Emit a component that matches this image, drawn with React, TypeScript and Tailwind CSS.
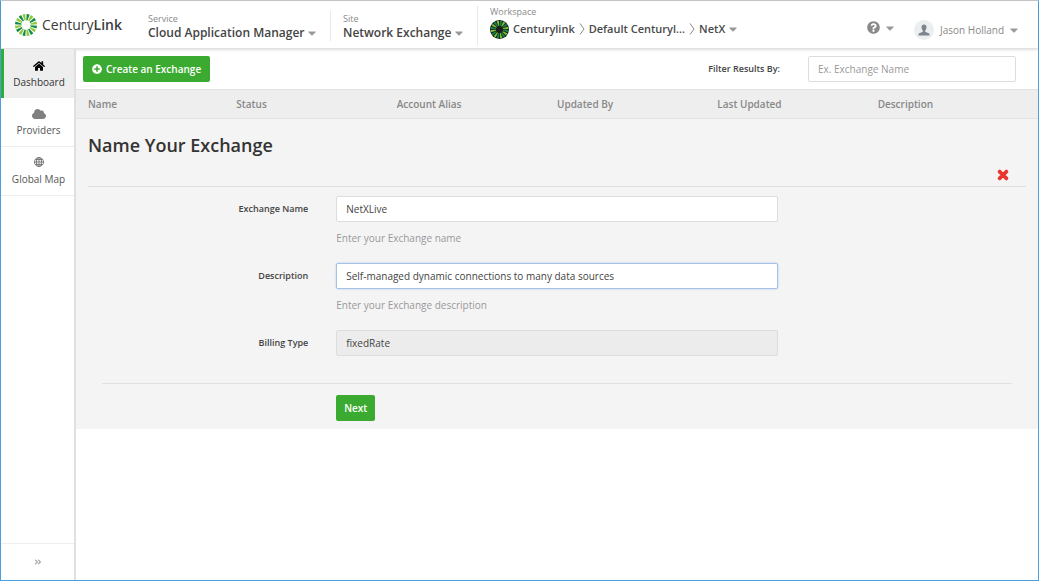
import React from 'react'
import { FaAngleDoubleRight, FaCaretDown, FaCloud, FaHome, FaPlusCircle, FaQuestionCircle, FaTimes } from 'react-icons/fa'

const columns = ['Name', 'Status', 'Account Alias', 'Updated By', 'Last Updated', 'Description']

const rays = Array.from({ length: 16 }, (_, i) => i)

const Burst = ({ dark, light }: { dark: string, light: string }) => (
	<g>
		{rays.map((i) => (
			<polygon
				key={i}
				points="-1.5,-11 1.5,-11 0.6,-4.6 -0.6,-4.6"
				fill={i % 2 ? light : dark}
				transform={`rotate(${i * 22.5 + 11.25})`}
			/>
		))}
	</g>
)

const Logo = () => (
	<a href="#" className="flex w-[132px] shrink-0 items-center gap-1 pl-[13px] text-sm leading-5 text-[#3c3c3c]">
		<svg className="h-6 w-6 shrink-0" viewBox="-12 -12 24 24" aria-hidden="true">
			<Burst dark="#118a43" light="#8cc83c" />
		</svg>
		<span>Century<b className="font-semibold">Link</b></span>
	</a>
)

const WorkspaceBadge = () => (
	<svg className="h-[19px] w-[19px] shrink-0" viewBox="-12 -12 24 24" aria-hidden="true">
		<circle r="12" fill="#1c1f1c" />
		<Burst dark="#0c8a45" light="#86bd35" />
	</svg>
)

const Globe = () => (
	<svg className="h-2.5 w-2.5" viewBox="0 0 20 20" fill="none" stroke="#7a7a7a" strokeWidth="2" aria-hidden="true">
		<circle cx="10" cy="10" r="9" />
		<ellipse cx="10" cy="10" rx="5" ry="9" />
		<path d="M10 1v18M1 10h18M3 5h14M3 15h14" />
	</svg>
)

const Person = () => (
	<svg className="h-3 w-3" viewBox="0 0 24 24" fill="#7d868d" aria-hidden="true">
		<path d="M12 1c3 0 5 2.200 5 5.500 0 3-1.300 5.500-2.600 6.700v2.300c1.800 1.200 7.600 2.200 8.600 4.500V23H1v-3c1-2.300 6.800-3.300 8.600-4.500v-2.300C8.300 12 7 9.500 7 6.500 7 3.200 9 1 12 1z" />
	</svg>
)

const Caret = () => <FaCaretDown className="h-3 w-2 shrink-0 text-[#999]" preserveAspectRatio="xMidYMid slice" aria-hidden="true" />

const Chevron = () => (
	<svg className="h-3 w-1.5 shrink-0" viewBox="0 0 6 12" fill="none" stroke="#8a8a8a" aria-hidden="true">
		<path d="M1 0.500L5 6L1 11.500" />
	</svg>
)

const Picker = ({ label, value }: { label: string, value: string }) => (
	<div className="flex flex-col pt-0.5">
		<span className="text-[9px] leading-3 text-[#8a8a8a]">{label}</span>
		<button className="flex items-center gap-1 text-xs leading-4 font-semibold text-[#444]">
			{value}
			<Caret />
		</button>
	</div>
)

const Header = () => (
	<header className="flex h-12 items-center border-b border-[#e2e2e2] whitespace-nowrap shadow-sm">
		<Logo />
		<div className="flex flex-1 items-center pt-0.5">
			<div className="w-[197px] pl-[15px]">
				<Picker label="Service" value="Cloud Application Manager" />
			</div>
			<div className="flex w-[147px] border-l border-[#e8e8e8] pl-3">
				<Picker label="Site" value="Network Exchange" />
			</div>
			<div className="border-l border-[#e8e8e8] pb-1.5 pl-3">
				<p className="text-[9px] leading-3 text-[#8a8a8a]">Workspace</p>
				<nav className="flex items-center pt-px text-[11px] leading-5 font-semibold text-[#4a4a4a]">
					<WorkspaceBadge />
					<a href="#" className="mx-1">Centurylink</a>
					<Chevron />
					<a href="#" className="mx-1">Default Centuryl...</a>
					<Chevron />
					<button className="ml-1 flex items-center gap-1">NetX <Caret /></button>
				</nav>
			</div>
		</div>
		<div className="flex items-center gap-5 pt-2.5 pr-5">
			<button className="flex items-center gap-1.5 pb-1" aria-label="Help">
				<FaQuestionCircle className="h-[13px] w-[13px] text-[#8a8a8a]" />
				<Caret />
			</button>
			<button className="flex items-center gap-1.5 text-[10px] leading-5 text-[#888]">
				<span className="flex h-5 w-5 items-center justify-center rounded-full bg-[#eceff0]"><Person /></span>
				Jason Holland
				<Caret />
			</button>
		</div>
	</header>
)

const Sidebar = () => (
	<aside className="flex w-[75px] shrink-0 flex-col border-r-2 border-[#e0e0e0]">
		<nav className="flex flex-col text-center text-[10px] leading-4 text-[#555]">
			<a href="#" className="flex h-[49px] flex-col items-center justify-center gap-0.5 border-l-3 border-[#2fae33] bg-[#eee] pt-0.5 text-[#333]">
				<FaHome className="h-3 w-3 text-black" />
				Dashboard
			</a>
			<a href="#" className="flex h-[49px] flex-col items-center justify-center gap-0.5 border-b border-[#eee] pt-0.5 pl-0.5">
				<FaCloud className="h-3 w-3.5 text-[#808080]" />
				Providers
			</a>
			<a href="#" className="flex h-[49px] flex-col items-center justify-center gap-1 border-b border-[#eee] pt-0.5 pl-0.5">
				<Globe />
				Global Map
			</a>
		</nav>
		<button className="mt-auto flex h-[37px] items-center justify-center border-t border-[#eee] text-[#aaa]" aria-label="Expand menu">
			<FaAngleDoubleRight className="h-2 w-2" />
		</button>
	</aside>
)

type FieldProps = {
	id: string,
	label: string,
	value: string,
	help?: string,
	active?: boolean,
	disabled?: boolean,
}

const Field = ({ id, label, value, help, active, disabled }: FieldProps) => (
	<div className="grid grid-cols-[206fr_441fr_206fr] gap-x-7">
		<label htmlFor={id} className="text-right text-[9px] leading-[26px] font-semibold text-[#444]">{label}</label>
		<div className="h-[67px]">
			<input
				id={id}
				type="text"
				defaultValue={value}
				disabled={disabled}
				className={`block h-[26px] w-full rounded-xs border px-[9px] text-[10px] text-[#444] outline-none ${active ? 'border-[#a5c3e6] shadow-[0_0_2px_#a5c3e6]' : 'border-[#ddd]'} ${disabled ? 'bg-[#ececec]' : 'bg-white'}`}
			/>
			{help && <p className="mt-2 text-[10px] leading-4 text-[#999]">{help}</p>}
		</div>
	</div>
)

const App = () => {
	return (
		<div className="flex min-h-screen flex-col border border-t-[#c8c8c8] border-x-[#4a9fe0] border-b-[#4a9fe0] bg-white font-['Open_Sans','Noto_Sans',sans-serif]">
			<Header />
			<div className="flex flex-1">
				<Sidebar />
				<main className="min-w-0 flex-1">
					<section className="flex h-10 items-center justify-between pr-[22px] pl-[7px]">
						<button className="flex h-[26px] items-center gap-1 rounded-xs bg-[#3aab30] px-[9px] text-[10px] font-semibold text-white">
							<FaPlusCircle className="h-2.5 w-2.5" />
							Create an Exchange
						</button>
						<div className="flex items-center gap-7">
							<label htmlFor="filter" className="text-[9px] font-semibold text-[#444]">Filter Results By:</label>
							<input
								id="filter"
								type="text"
								placeholder="Ex. Exchange Name"
								className="h-[26px] w-52 rounded-xs border border-[#ddd] px-[9px] text-[10px] outline-none placeholder:text-[#999]"
							/>
						</div>
					</section>
					<table className="w-full table-fixed border-y border-[#e2e2e2] bg-[#eee]">
						<thead>
							<tr>
								{columns.map((column) => (
									<th key={column} className="h-[29px] text-left text-[10px] leading-4 font-semibold text-[#888] first:pl-3">{column}</th>
								))}
							</tr>
						</thead>
					</table>
					<section className="bg-[#f4f4f4] px-3 pb-2">
						<h1 className="pt-3.5 text-lg leading-6 font-semibold text-[#333]">Name Your Exchange</h1>
						<div className="flex h-[30px] items-end justify-end border-b border-[#e0e0e0] pr-4 pb-1">
							<button className="text-[#e8352e]" aria-label="Close">
								<FaTimes className="h-3.5 w-3.5 stroke-current stroke-[40px]" />
							</button>
						</div>
						<form className="mx-3.5 pt-[9px]" onSubmit={(e) => e.preventDefault()}>
							<Field id="exchange-name" label="Exchange Name" value="NetXLive" help="Enter your Exchange name" />
							<Field id="description" label="Description" value="Self-managed dynamic connections to many data sources" help="Enter your Exchange description" active />
							<Field id="billing-type" label="Billing Type" value="fixedRate" disabled />
							<div className="-mt-3.5 grid grid-cols-[206fr_441fr_206fr] gap-x-7 border-t border-[#e0e0e0] pt-[11px]">
								<div className="col-start-2">
									<button type="submit" className="block h-[26px] rounded-xs bg-[#3aab30] px-2 text-[10px] font-semibold text-white">Next</button>
								</div>
							</div>
						</form>
					</section>
				</main>
			</div>
		</div>
	)
}

export default App
